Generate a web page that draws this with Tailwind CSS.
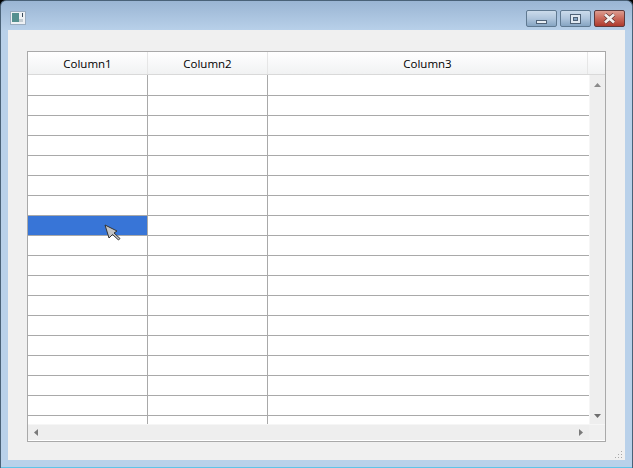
<!DOCTYPE html>
<html lang="en">
<head>
  <meta charset="UTF-8" />
  <title>Table window</title>
  <script src="https://cdn.jsdelivr.net/npm/@tailwindcss/browser@4"></script>
</head>
<body class="bg-black">
  <div class="w-[633px] h-[468px] overflow-hidden flex flex-col rounded-t-[6px] border-x border-t border-[#4a6278] border-b-0 bg-gradient-to-b from-[#9ab5d3] via-[#b9d1ea] via-[30px] to-[#b9d1ea] font-['Open_Sans',sans-serif] text-[11.5px] text-black">

    <!-- Title bar -->
    <div class="h-[29px] shrink-0 flex justify-between pl-[9px] pr-[7px]">
      <svg class="mt-[10px]" width="16" height="14" viewBox="0 0 16 14">
        <rect x="0.5" y="0.5" width="15" height="13" fill="#eef1f4" stroke="#9aacbf" />
        <rect x="2" y="2" width="7" height="9" fill="#55908f" />
        <rect x="9" y="8" width="4" height="3" fill="#c4ccd2" />
        <rect x="12" y="2" width="1" height="4" fill="#3c4c5c" />
      </svg>
      <div class="flex gap-[3px] mt-[9px] h-[17px]">
        <div class="w-[31px] h-[17px] rounded-[2px] border border-[#5f7991] bg-gradient-to-b from-[#cbdbeb] via-[#afc5dc] to-[#86a5c3] flex items-end justify-center pb-[2px]">
          <div class="w-[11px] h-[4px] bg-[#e8eef4] border border-[#4f6277]"></div>
        </div>
        <div class="w-[31px] h-[17px] rounded-[2px] border border-[#5f7991] bg-gradient-to-b from-[#cbdbeb] via-[#afc5dc] to-[#86a5c3] flex items-center justify-center">
          <div class="w-[11px] h-[10px] bg-[#dfe8f1] border border-[#4f6277] flex items-center justify-center">
            <div class="w-[5px] h-[4px] bg-[#86a5c3] border border-[#4f6277]"></div>
          </div>
        </div>
        <div class="w-[31px] h-[17px] rounded-[2px] border border-[#5e3a3c] bg-gradient-to-b from-[#dc9c90] via-[#c9685a] to-[#ad3a2e] flex items-center justify-center">
          <svg width="15" height="11" viewBox="0 0 15 11">
            <path d="M3 1.5 L12 9.5 M12 1.5 L3 9.5" stroke="#5a3232" stroke-width="4" />
            <path d="M3 1.5 L12 9.5 M12 1.5 L3 9.5" stroke="#f4f0ee" stroke-width="2.8" />
          </svg>
        </div>
      </div>
    </div>

    <!-- Client area -->
    <div class="relative w-[617px] h-[430px] ml-[7px] shrink-0 bg-[#f0f0f0] pt-[21px] pl-[19px]">
      <div class="w-[579px] h-[391px] border border-[#a9a9a9] bg-white flex flex-col overflow-hidden">

        <!-- Header -->
        <div class="h-[23px] shrink-0 flex border-b border-[#d9d9d9] bg-gradient-to-b from-white to-[#f1f2f3]">
          <div class="w-[120px] pt-[1px] border-r border-[#e6e6e6] flex items-center justify-center">Column1</div>
          <div class="w-[120px] pt-[1px] border-r border-[#e6e6e6] flex items-center justify-center">Column2</div>
          <div class="w-[320px] pt-[1px] border-r border-[#e6e6e6] flex items-center justify-center">Column3</div>
          <div class="flex-1"></div>
        </div>

        <div class="flex shrink-0 h-[350px]">
          <!-- Rows -->
          <div class="w-[561px] h-[350px] overflow-hidden flex flex-col">
            <div class="h-[21px] shrink-0 flex border-b border-[#a9a9a9]"><div class="w-[120px] border-r border-[#a9a9a9]"></div><div class="w-[120px] border-r border-[#a9a9a9]"></div></div>
            <div class="h-[20px] shrink-0 flex border-b border-[#a9a9a9]"><div class="w-[120px] border-r border-[#a9a9a9]"></div><div class="w-[120px] border-r border-[#a9a9a9]"></div></div>
            <div class="h-[20px] shrink-0 flex border-b border-[#a9a9a9]"><div class="w-[120px] border-r border-[#a9a9a9]"></div><div class="w-[120px] border-r border-[#a9a9a9]"></div></div>
            <div class="h-[20px] shrink-0 flex border-b border-[#a9a9a9]"><div class="w-[120px] border-r border-[#a9a9a9]"></div><div class="w-[120px] border-r border-[#a9a9a9]"></div></div>
            <div class="h-[20px] shrink-0 flex border-b border-[#a9a9a9]"><div class="w-[120px] border-r border-[#a9a9a9]"></div><div class="w-[120px] border-r border-[#a9a9a9]"></div></div>
            <div class="h-[20px] shrink-0 flex border-b border-[#a9a9a9]"><div class="w-[120px] border-r border-[#a9a9a9]"></div><div class="w-[120px] border-r border-[#a9a9a9]"></div></div>
            <div class="h-[20px] shrink-0 flex border-b border-[#a9a9a9]"><div class="w-[120px] border-r border-[#a9a9a9]"></div><div class="w-[120px] border-r border-[#a9a9a9]"></div></div>
            <div class="h-[20px] shrink-0 flex border-b border-[#a9a9a9]"><div class="w-[120px] border-r border-[#a9a9a9] bg-[#3875d7]"></div><div class="w-[120px] border-r border-[#a9a9a9]"></div></div>
            <div class="h-[20px] shrink-0 flex border-b border-[#a9a9a9]"><div class="w-[120px] border-r border-[#a9a9a9]"></div><div class="w-[120px] border-r border-[#a9a9a9]"></div></div>
            <div class="h-[20px] shrink-0 flex border-b border-[#a9a9a9]"><div class="w-[120px] border-r border-[#a9a9a9]"></div><div class="w-[120px] border-r border-[#a9a9a9]"></div></div>
            <div class="h-[20px] shrink-0 flex border-b border-[#a9a9a9]"><div class="w-[120px] border-r border-[#a9a9a9]"></div><div class="w-[120px] border-r border-[#a9a9a9]"></div></div>
            <div class="h-[20px] shrink-0 flex border-b border-[#a9a9a9]"><div class="w-[120px] border-r border-[#a9a9a9]"></div><div class="w-[120px] border-r border-[#a9a9a9]"></div></div>
            <div class="h-[20px] shrink-0 flex border-b border-[#a9a9a9]"><div class="w-[120px] border-r border-[#a9a9a9]"></div><div class="w-[120px] border-r border-[#a9a9a9]"></div></div>
            <div class="h-[20px] shrink-0 flex border-b border-[#a9a9a9]"><div class="w-[120px] border-r border-[#a9a9a9]"></div><div class="w-[120px] border-r border-[#a9a9a9]"></div></div>
            <div class="h-[20px] shrink-0 flex border-b border-[#a9a9a9]"><div class="w-[120px] border-r border-[#a9a9a9]"></div><div class="w-[120px] border-r border-[#a9a9a9]"></div></div>
            <div class="h-[20px] shrink-0 flex border-b border-[#a9a9a9]"><div class="w-[120px] border-r border-[#a9a9a9]"></div><div class="w-[120px] border-r border-[#a9a9a9]"></div></div>
            <div class="h-[20px] shrink-0 flex border-b border-[#a9a9a9]"><div class="w-[120px] border-r border-[#a9a9a9]"></div><div class="w-[120px] border-r border-[#a9a9a9]"></div></div>
            <div class="h-[20px] shrink-0 flex border-b border-[#a9a9a9]"><div class="w-[120px] border-r border-[#a9a9a9]"></div><div class="w-[120px] border-r border-[#a9a9a9]"></div></div>
          </div>
          <!-- Vertical scrollbar -->
          <div class="w-[16px] h-[350px] bg-[#eeeeee] flex flex-col justify-between items-center pt-[8px] pb-[7px] border-l border-[#f6f6f6]">
            <svg width="7" height="4" viewBox="0 0 7 4"><path d="M3.5 0 L7 4 H0 Z" fill="#8a8a8a" /></svg>
            <svg width="7" height="4" viewBox="0 0 7 4"><path d="M0 0 H7 L3.5 4 Z" fill="#6e6e6e" /></svg>
          </div>
        </div>

        <!-- Horizontal scrollbar -->
        <div class="h-[16px] shrink-0 flex -mt-px relative border-t border-[#f6f6f6] bg-[#f0f0f0]">
          <div class="w-[561px] bg-[#eeeeee] flex justify-between items-center px-[6px]">
            <svg width="4" height="7" viewBox="0 0 4 7"><path d="M4 0 V7 L0 3.5 Z" fill="#7a7a7a" /></svg>
            <svg width="4" height="7" viewBox="0 0 4 7"><path d="M0 0 L4 3.5 L0 7 Z" fill="#7a7a7a" /></svg>
          </div>
        </div>
      </div>

      <!-- Mouse pointer over the selected cell -->
      <svg class="absolute left-[96px] top-[194px]" width="18" height="18" viewBox="0 0 18 18">
        <path d="M1 1 L13 7 L10 9 L16 14.5 L14.5 16 L8.5 10.5 L5 14 Z" fill="#c6c6c6" stroke="#333333" stroke-width="1" stroke-linejoin="round" />
      </svg>

      <!-- Size grip -->
      <svg class="absolute right-[2px] bottom-[1px]" width="9" height="9" viewBox="0 0 9 9" fill="#a8a8a8">
        <rect x="7" y="1" width="1" height="1" /><rect x="4" y="4" width="1" height="1" /><rect x="7" y="4" width="1" height="1" /><rect x="1" y="7" width="1" height="1" /><rect x="4" y="7" width="1" height="1" /><rect x="7" y="7" width="1" height="1" />
      </svg>
    </div>

    <div class="flex-1 border-b border-[#5fc4e8]"></div>
  </div>
</body>
</html>
